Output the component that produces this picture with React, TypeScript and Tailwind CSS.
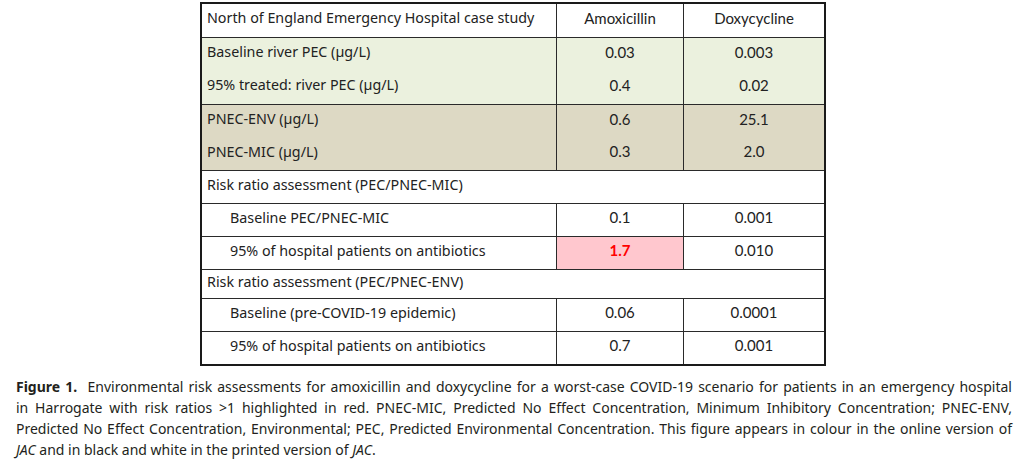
import React from 'react';

const label = "font-['Noto_Sans',sans-serif] text-[14.3px] text-[#222]";
const num = "font-['Lato',sans-serif] text-[15px] text-[#222]";

type Row = { name: string; a: string; d: string; indent?: boolean; hi?: boolean };

const Cells: React.FC<{ row: Row; h: string; line?: boolean }> = ({ row, h, line }) => (
  <div className={`grid grid-cols-[354px_127px_141px] ${h} ${line ? 'border-b border-[#2a2a2a]' : ''}`}>
    <div className={`flex items-center pb-[5px] ${row.indent ? 'pl-[28px]' : 'pl-[5px]'} ${label}`}>{row.name}</div>
    <div
      className={`flex items-center justify-center pb-[5px] border-l border-[#2a2a2a] ${num} ${
        row.hi ? 'bg-[#ffc7ce] !text-[#ff0000] font-bold' : ''
      }`}
    >
      {row.a}
    </div>
    <div className={`flex items-center justify-center pb-[5px] border-l border-[#2a2a2a] ${num}`}>{row.d}</div>
  </div>
);

const Span: React.FC<{ text: string; h: string }> = ({ text, h }) => (
  <div className={`flex items-center pl-[5px] pb-[5px] border-b border-[#2a2a2a] ${h} ${label}`}>{text}</div>
);

export default function App() {
  return (
    <div className="w-[1024px] h-[471px] bg-white overflow-hidden pt-[2px]">
      <div className="ml-[200px] w-[626px] border-2 border-[#1a1a1a]">
        <Cells row={{ name: 'North of England Emergency Hospital case study', a: 'Amoxicillin', d: 'Doxycycline' }} h="h-[34px]" line />
        <div className="bg-[#ebf1de] border-b border-[#2a2a2a]">
          <Cells row={{ name: 'Baseline river PEC (µg/L)', a: '0.03', d: '0.003' }} h="h-[33px]" />
          <Cells row={{ name: '95% treated: river PEC (µg/L)', a: '0.4', d: '0.02' }} h="h-[33px]" />
        </div>
        <div className="bg-[#ddd9c4] border-b border-[#2a2a2a]">
          <Cells row={{ name: 'PNEC-ENV (µg/L)', a: '0.6', d: '25.1' }} h="h-[33px]" />
          <Cells row={{ name: 'PNEC-MIC (µg/L)', a: '0.3', d: '2.0' }} h="h-[32px]" />
        </div>
        <Span text="Risk ratio assessment (PEC/PNEC-MIC)" h="h-[33px]" />
        <Cells row={{ name: 'Baseline PEC/PNEC-MIC', a: '0.1', d: '0.001', indent: true }} h="h-[33px]" line />
        <Cells row={{ name: '95% of hospital patients on antibiotics', a: '1.7', d: '0.010', indent: true, hi: true }} h="h-[33px]" line />
        <Span text="Risk ratio assessment (PEC/PNEC-ENV)" h="h-[29px]" />
        <Cells row={{ name: 'Baseline (pre-COVID-19 epidemic)', a: '0.06', d: '0.0001', indent: true }} h="h-[33px]" line />
        <Cells row={{ name: '95% of hospital patients on antibiotics', a: '0.7', d: '0.001', indent: true }} h="h-[32px]" />
      </div>

      <div className="mt-[10px] ml-[16px] w-[996px] font-['Noto_Sans',sans-serif] text-[14px] leading-[21px] text-[#231f20]">
        <p className="text-justify [text-align-last:justify] whitespace-nowrap">
          <b>Figure 1.</b>&nbsp; Environmental risk assessments for amoxicillin and doxycycline for a worst-case COVID-19 scenario for patients in an emergency hospital
        </p>
        <p className="text-justify [text-align-last:justify] whitespace-nowrap">
          in Harrogate with risk ratios &gt;1 highlighted in red. PNEC-MIC, Predicted No Effect Concentration, Minimum Inhibitory Concentration; PNEC-ENV,
        </p>
        <p className="text-justify [text-align-last:justify] whitespace-nowrap">
          Predicted No Effect Concentration, Environmental; PEC, Predicted Environmental Concentration. This figure appears in colour in the online version of
        </p>
        <p className="whitespace-nowrap">
          <i>JAC</i> and in black and white in the printed version of <i>JAC</i>.
        </p>
      </div>
    </div>
  );
}
